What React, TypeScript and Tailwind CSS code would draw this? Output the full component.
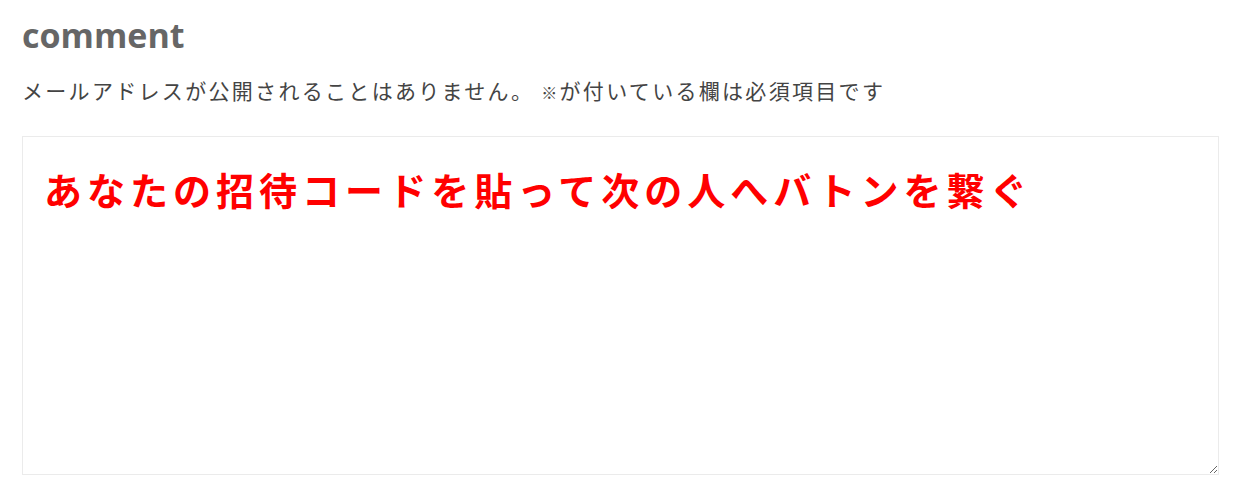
export default function App() {
    return (
        <div className="min-h-[496px] bg-white px-[22px] pt-[10px]">
            <h3
                className="text-[34px] leading-[50px] font-bold text-[#666666]"
                style={{ fontFamily: '"Open Sans", "Noto Sans CJK JP", sans-serif' }}
            >
                comment
            </h3>
            <p
                className="mt-[15px] text-[21px] leading-[30px] tracking-[0.11em] text-[#444444]"
                style={{ fontFamily: '"Noto Sans CJK JP", sans-serif' }}
            >
                メールアドレスが公開されることはありません。 <span className="text-[16px]">※</span>が付いている欄は必須項目です
            </p>
            <div className="mt-[29px]">
                <textarea
                    readOnly
                    defaultValue="あなたの招待コードを貼って次の人へバトンを繋ぐ"
                    className="block h-[339px] w-[1197px] border border-[#ebebeb] bg-white px-[21px] py-[24px] text-[38px] leading-[56px] font-bold tracking-[0.132em] text-[#ff0000] outline-none"
                    style={{ fontFamily: '"Noto Sans CJK JP", serif' }}
                />
            </div>
        </div>
    )
}
